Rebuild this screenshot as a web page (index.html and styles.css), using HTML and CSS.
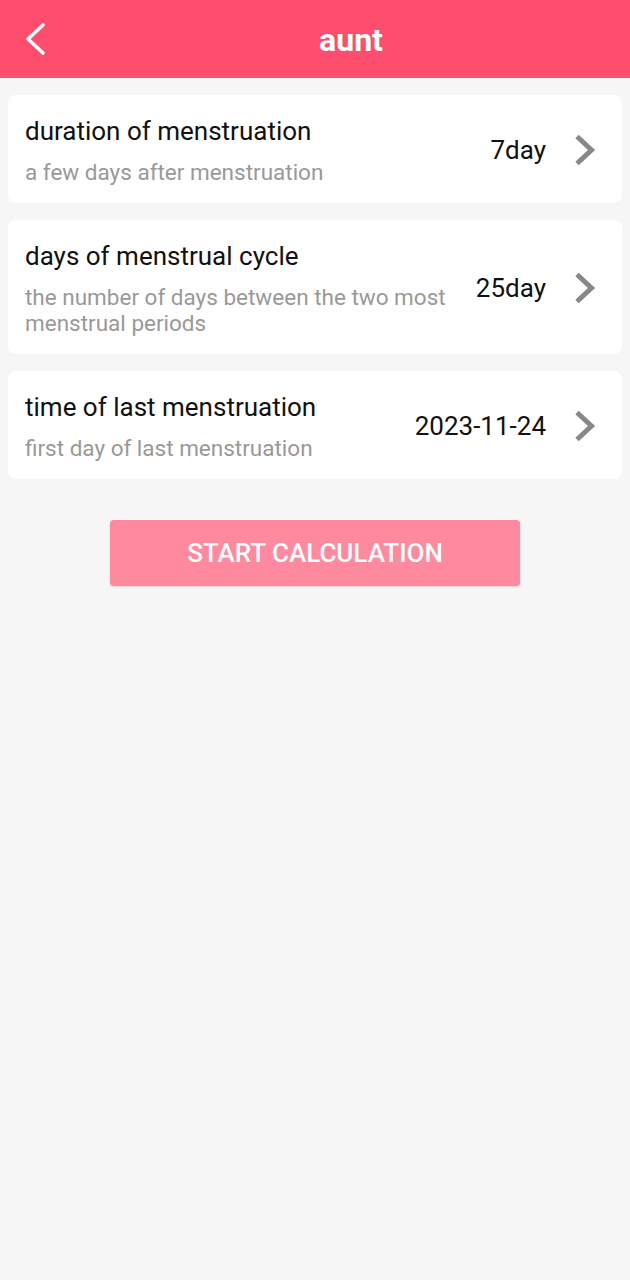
FILE: index.html
```html
<!DOCTYPE html>
<html lang="en">

<head>
    <meta charset="UTF-8">
    <meta name="viewport" content="width=device-width, initial-scale=1.0">
    <title>aunt</title>
    <link rel="stylesheet" href="styles.css">
</head>

<body>
    <div class="header">
        <div class="back-btn">
            <svg width="26" height="34" viewBox="0 0 26 34">
                <path d="M21 3 L6 17 L21 31" fill="none" stroke="#fff" stroke-width="3.6" stroke-linecap="round" stroke-linejoin="round" />
            </svg>
        </div>
        <div class="header-title">aunt</div>
    </div>

    <div class="list">
        <div class="item">
            <div class="item-text">
                <div class="item-title">duration of menstruation</div>
                <div class="item-desc">a few days after menstruation</div>
            </div>
            <div class="item-value">7day</div>
            <svg class="arrow" width="26" height="32" viewBox="0 0 26 32">
                <path d="M5 2.5 L19.5 16 L5 29.5" fill="none" stroke="#888" stroke-width="5" stroke-linejoin="miter" />
            </svg>
        </div>

        <div class="item">
            <div class="item-text">
                <div class="item-title">days of menstrual cycle</div>
                <div class="item-desc">the number of days between the two most menstrual periods</div>
            </div>
            <div class="item-value">25day</div>
            <svg class="arrow" width="26" height="32" viewBox="0 0 26 32">
                <path d="M5 2.5 L19.5 16 L5 29.5" fill="none" stroke="#888" stroke-width="5" stroke-linejoin="miter" />
            </svg>
        </div>

        <div class="item">
            <div class="item-text">
                <div class="item-title">time of last menstruation</div>
                <div class="item-desc">first day of last menstruation</div>
            </div>
            <div class="item-value">2023-11-24</div>
            <svg class="arrow" width="26" height="32" viewBox="0 0 26 32">
                <path d="M5 2.5 L19.5 16 L5 29.5" fill="none" stroke="#888" stroke-width="5" stroke-linejoin="miter" />
            </svg>
        </div>
    </div>

    <div class="btn-wrap">
        <button class="start-btn">START CALCULATION</button>
    </div>
</body>

</html>
```

FILE: styles.css
```css
body {
    margin: 0;
    font-family: Roboto, "Liberation Sans", sans-serif;
    background-color: #f6f6f6;
    min-height: 1280px;
}

.header {
    height: 78px;
    background-color: #ff4d6e;
    display: flex;
    align-items: center;
}

.back-btn {
    width: 72px;
    display: flex;
    align-items: center;
    padding-left: 22px;
    box-sizing: border-box;
}

.back-btn svg {
    display: block;
}

.header-title {
    flex: 1;
    text-align: center;
    color: white;
    font-size: 32px;
    font-weight: bold;
    padding-top: 2px;
}

.list {
    padding: 17px 8px 0;
    display: flex;
    flex-direction: column;
    gap: 17px;
}

.item {
    background-color: white;
    border-radius: 8px;
    padding: 19px 24px 18px 17px;
    display: flex;
    align-items: center;
}

.item-text {
    flex: 1;
    min-width: 0;
}

.item-title {
    font-size: 26px;
    line-height: 34px;
    color: #111;
}

.item-desc {
    margin-top: 11px;
    font-size: 22.5px;
    line-height: 26px;
    color: #999;
}

.item-value {
    font-size: 26px;
    color: #111;
    margin-left: 18px;
    white-space: nowrap;
}

.arrow {
    display: block;
    margin-left: 26px;
    flex-shrink: 0;
}

.btn-wrap {
    display: flex;
    justify-content: center;
    padding-top: 41px;
}

.start-btn {
    width: 410px;
    height: 66px;
    border: none;
    border-radius: 4px;
    background-color: #ff8a9f;
    color: white;
    font-family: Roboto, "Liberation Sans", sans-serif;
    font-size: 26px;
    font-weight: 500;
    box-shadow: 0 1px 2px rgba(0, 0, 0, 0.15);
}
```
